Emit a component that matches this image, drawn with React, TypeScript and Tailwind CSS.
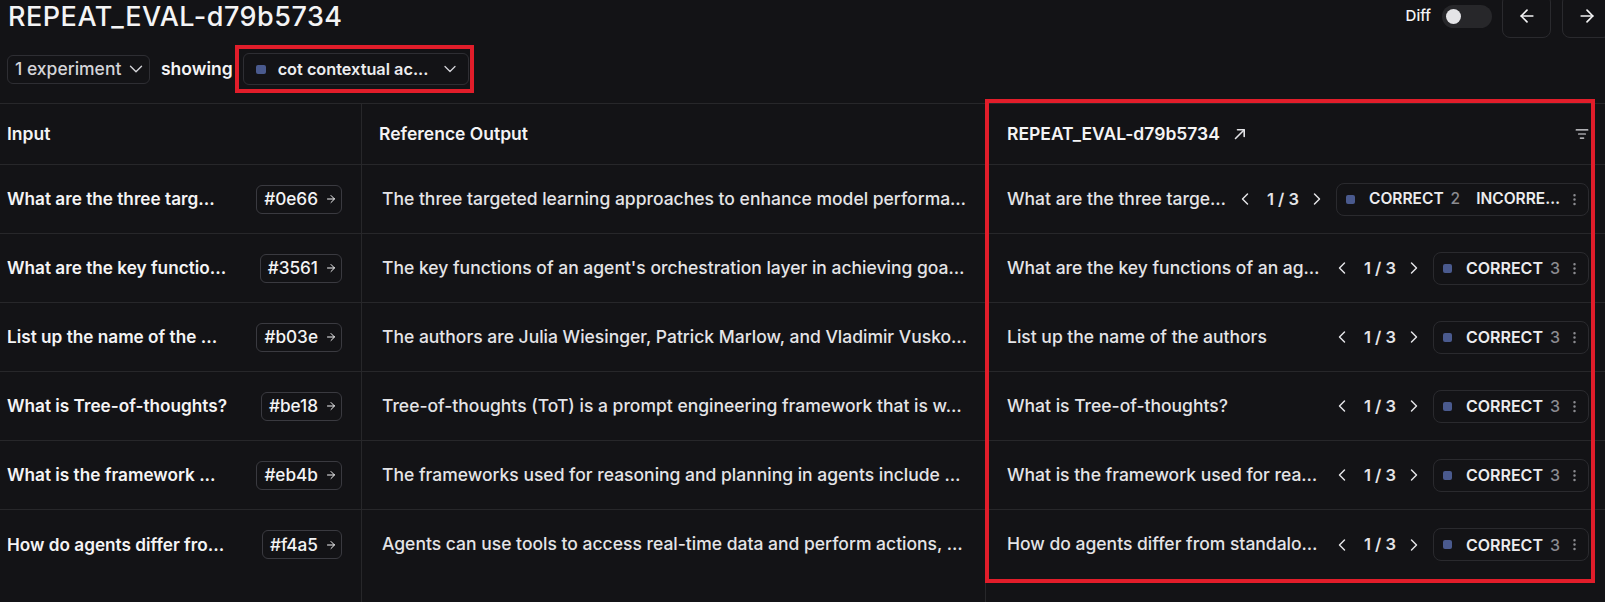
import { ArrowLeft, ArrowRight, ChevronDown, ChevronLeft, ChevronRight, EllipsisVertical, ListFilter } from "lucide-react";

type Row = {
  input: string;
  id: string;
  reference: string;
  question: string;
  labels: { name: string; count: string }[];
};

const rows: Row[] = [
  {
    input: "What are the three targ...",
    id: "#0e66",
    reference: "The three targeted learning approaches to enhance model performa…",
    question: "What are the three targe…",
    labels: [
      { name: "CORRECT", count: "2" },
      { name: "INCORRE…", count: "" },
    ],
  },
  {
    input: "What are the key functio...",
    id: "#3561",
    reference: "The key functions of an agent's orchestration layer in achieving goa…",
    question: "What are the key functions of an ag…",
    labels: [{ name: "CORRECT", count: "3" }],
  },
  {
    input: "List up the name of the ...",
    id: "#b03e",
    reference: "The authors are Julia Wiesinger, Patrick Marlow, and Vladimir Vusko…",
    question: "List up the name of the authors",
    labels: [{ name: "CORRECT", count: "3" }],
  },
  {
    input: "What is Tree-of-thoughts?",
    id: "#be18",
    reference: "Tree-of-thoughts (ToT) is a prompt engineering framework that is w…",
    question: "What is Tree-of-thoughts?",
    labels: [{ name: "CORRECT", count: "3" }],
  },
  {
    input: "What is the framework ...",
    id: "#eb4b",
    reference: "The frameworks used for reasoning and planning in agents include …",
    question: "What is the framework used for rea…",
    labels: [{ name: "CORRECT", count: "3" }],
  },
  {
    input: "How do agents differ fro...",
    id: "#f4a5",
    reference: "Agents can use tools to access real-time data and perform actions, …",
    question: "How do agents differ from standalo…",
    labels: [{ name: "CORRECT", count: "3" }],
  },
];

const cellBorder = (i: number) => (i < rows.length - 1 ? "border-b border-[#27272a]" : "");

const FeedbackBadge = ({ labels }: { labels: Row["labels"] }) => (
  <div
    className={`ml-[9px] flex h-[33px] shrink-0 items-center rounded-lg border border-[#2a2a2e] pl-[9px] pr-[6px] ${
      labels.length > 1 ? "text-[15.5px]" : "text-[16px]"
    }`}
  >
    <span className="mr-[14px] h-[9px] w-[9px] rounded-[2px] bg-[#4a5a8e]" />
    {labels.map((l, i) => (
      <span key={i} className={`flex items-center ${i > 0 ? "ml-[16px]" : ""}`}>
        <span className="font-semibold text-[#ececee]">{l.name}</span>
        {l.count && <span className="ml-[7px] font-medium text-[#8b8b90]">{l.count}</span>}
      </span>
    ))}
    <EllipsisVertical className="ml-[7px] text-[#8b8b90]" size={15} strokeWidth={2} />
  </div>
);

export default function App() {
  return (
    <div className="relative flex h-[602px] w-[1605px] flex-col overflow-hidden bg-[#131316] font-['Inter',sans-serif] text-[17.5px] text-[#ececee]">
      {/* title bar */}
      <div className="flex h-[46px] shrink-0 items-start justify-between pl-2">
        <h1 className="text-[27px] font-medium leading-[34px] tracking-[0.5px] text-[#f4f4f5]">REPEAT_EVAL-d79b5734</h1>
        <div className="-mr-[6px] -mt-[6px] flex h-[44px] items-center">
          <span className="text-[15px] font-medium text-[#f4f4f5]">Diff</span>
          <div className="ml-[11px] flex h-[23px] w-[50px] items-center rounded-full bg-[#27272a] pl-[4px]">
            <span className="h-[15px] w-[15px] rounded-full bg-[#e4e4e7]" />
          </div>
          <button className="ml-[10px] flex h-[44px] w-[49px] items-center justify-center rounded-lg border border-[#2a2a2e] text-[#f4f4f5]">
            <ArrowLeft size={20} strokeWidth={2} />
          </button>
          <button className="ml-[11px] flex h-[44px] w-[49px] items-center justify-center rounded-lg border border-[#2a2a2e] text-[#f4f4f5]">
            <ArrowRight size={20} strokeWidth={2} />
          </button>
        </div>
      </div>

      {/* filters */}
      <div className="flex h-[46px] shrink-0 items-center pl-[7px]">
        <button className="flex h-[29px] w-[143px] items-center rounded-md border border-[#2e2e33] pl-[7px] font-medium text-[#d4d4d8]">
          1 experiment
          <ChevronDown className="ml-[4px] text-[#d4d4d8]" size={22} strokeWidth={1.5} />
        </button>
        <span className="ml-[11px] font-semibold text-[#f4f4f5]">showing</span>
        <button className="ml-[10px] flex h-[32px] w-[226px] items-center rounded-md border border-[#2e2e33] pl-[12px] text-[16.3px] font-semibold text-[#ececee]">
          <span className="h-[9px] w-[10px] rounded-[2px] bg-[#4a5a8e]" />
          <span className="ml-[12px]">cot contextual ac...</span>
          <ChevronDown className="ml-auto mr-[8px] text-[#d4d4d8]" size={20} strokeWidth={1.5} />
        </button>
      </div>

      {/* table */}
      <div className="mt-[11px] flex flex-1 border-t border-[#27272a]">
        <div className="flex w-[362px] shrink-0 flex-col border-r border-[#27272a]">
          <div className="flex h-[61px] shrink-0 items-center border-b border-[#27272a] pl-[7px] font-semibold text-[#f4f4f5]">
            Input
          </div>
          {rows.map((r, i) => (
            <div key={r.id} className={`flex h-[69px] shrink-0 items-center justify-between pl-[7px] pr-[19px] text-[17.2px] ${cellBorder(i)}`}>
              <span className="whitespace-nowrap font-semibold text-[#f4f4f5]">{r.input}</span>
              <span className="flex h-[29px] items-center gap-[7px] rounded-md border border-[#3a3a40] pl-[7px] pr-[4px] font-medium text-[#f4f4f5]">
                {r.id}
                <ArrowRight size={12} strokeWidth={2} />
              </span>
            </div>
          ))}
        </div>

        <div className="flex w-[624px] shrink-0 flex-col border-r border-[#27272a]">
          <div className="flex h-[61px] shrink-0 items-center border-b border-[#27272a] pl-[17px] font-semibold text-[#f4f4f5]">
            Reference Output
          </div>
          {rows.map((r, i) => (
            <div key={r.id} className={`flex h-[69px] shrink-0 items-center pl-[20px] pr-[8px] ${cellBorder(i)}`}>
              <span className="overflow-hidden whitespace-nowrap font-medium text-[#e4e4e7]">{r.reference}</span>
            </div>
          ))}
        </div>

        <div className="flex min-w-0 flex-1 flex-col">
          <div className="flex h-[61px] shrink-0 items-center border-b border-[#27272a] pl-[21px] pr-[16px]">
            <span className="font-semibold text-[#f4f4f5]">REPEAT_EVAL-d79b5734</span>
            <svg className="ml-[14px] text-[#e4e4e7]" width="12" height="12" viewBox="0 0 12 12" fill="none" stroke="currentColor" strokeWidth="1.6" strokeLinecap="round" strokeLinejoin="round">
              <path d="M1.5 10.5 10 2" />
              <path d="M3.5 1.8H10.2V8.5" />
            </svg>
            <ListFilter className="ml-auto text-[#e4e4e7]" size={14} strokeWidth={2} />
          </div>
          {rows.map((r, i) => (
            <div key={r.id} className={`flex h-[69px] shrink-0 items-center pl-[21px] pr-[16px] ${cellBorder(i)}`}>
              <span className="min-w-0 flex-1 overflow-hidden whitespace-nowrap font-medium text-[#e4e4e7]">{r.question}</span>
              <div className="ml-[8px] flex shrink-0 items-center text-[#e4e4e7]">
                <ChevronLeft size={20} strokeWidth={1.75} />
                <span className="ml-[12px] mr-[8px] text-[16.5px] font-semibold">1 / 3</span>
                <ChevronRight size={20} strokeWidth={1.75} />
              </div>
              <FeedbackBadge labels={r.labels} />
            </div>
          ))}
        </div>
      </div>

      {/* annotation boxes */}
      <div className="pointer-events-none absolute left-[235px] top-[45px] h-[48px] w-[239px] border-4 border-[#e11d2a]" />
      <div className="pointer-events-none absolute left-[985px] top-[99px] h-[484px] w-[610px] border-4 border-[#e11d2a]" />
    </div>
  );
}
